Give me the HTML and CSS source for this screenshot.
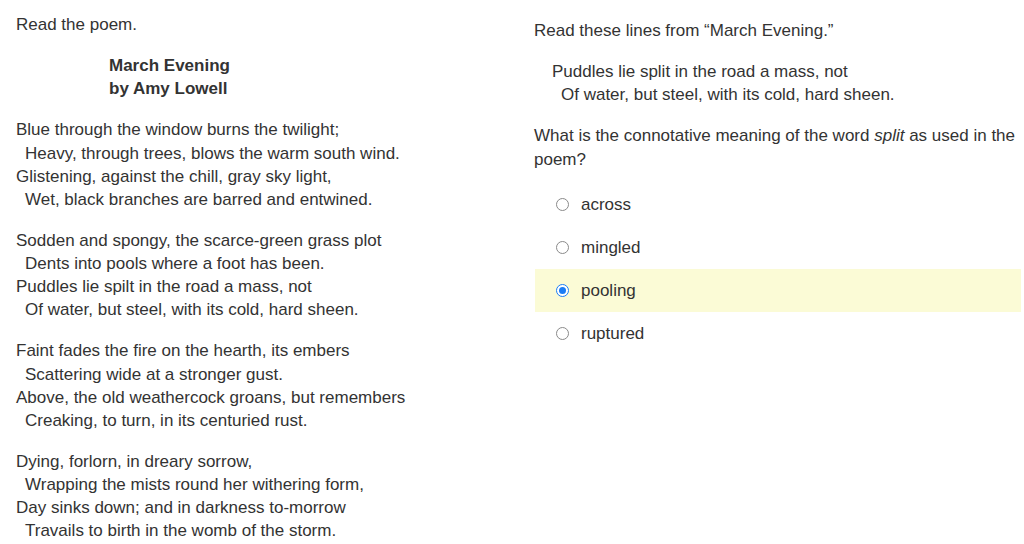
FILE: index.html
```html
<!DOCTYPE html>
<html>
<head>
<meta charset="utf-8">
<link rel="stylesheet" href="styles.css">
</head>
<body>
<div class="page">
  <section class="passage">
    <p class="block">Read the poem.</p>
    <div class="block title">
      <div>March Evening</div>
      <div>by Amy Lowell</div>
    </div>
    <div class="block stanza">
      <div>Blue through the window burns the twilight;</div>
      <div class="ind">Heavy, through trees, blows the warm south wind.</div>
      <div>Glistening, against the chill, gray sky light,</div>
      <div class="ind">Wet, black branches are barred and entwined.</div>
    </div>
    <div class="block stanza">
      <div>Sodden and spongy, the scarce-green grass plot</div>
      <div class="ind">Dents into pools where a foot has been.</div>
      <div>Puddles lie spilt in the road a mass, not</div>
      <div class="ind">Of water, but steel, with its cold, hard sheen.</div>
    </div>
    <div class="block stanza">
      <div>Faint fades the fire on the hearth, its embers</div>
      <div class="ind">Scattering wide at a stronger gust.</div>
      <div>Above, the old weathercock groans, but remembers</div>
      <div class="ind">Creaking, to turn, in its centuried rust.</div>
    </div>
    <div class="block stanza">
      <div>Dying, forlorn, in dreary sorrow,</div>
      <div class="ind">Wrapping the mists round her withering form,</div>
      <div>Day sinks down; and in darkness to-morrow</div>
      <div class="ind">Travails to birth in the womb of the storm.</div>
    </div>
  </section>
  <section class="question">
    <p class="block">Read these lines from “March Evening.”</p>
    <div class="block quote">
      <div>Puddles lie split in the road a mass, not</div>
      <div class="ind">Of water, but steel, with its cold, hard sheen.</div>
    </div>
    <p class="block">What is the connotative meaning of the word <em>split</em> as used in the poem?</p>
    <ul class="options">
      <li class="option"><span class="radio"></span><span>across</span></li>
      <li class="option"><span class="radio"></span><span>mingled</span></li>
      <li class="option selected"><span class="radio checked"></span><span>pooling</span></li>
      <li class="option"><span class="radio"></span><span>ruptured</span></li>
    </ul>
  </section>
</div>
</body>
</html>
```
FILE: styles.css
```css
html, body {
  margin: 0;
  padding: 0;
  background: #ffffff;
}
body {
  font-family: "Liberation Sans", Arial, Helvetica, sans-serif;
  font-size: 17px;
  line-height: 23.12px;
  color: #333333;
}
.page {
  display: grid;
  grid-template-columns: 518px 487px;
  column-gap: 0;
  padding-left: 16px;
}
.passage {
  padding-top: 13px;
}
.question {
  padding-top: 19px;
}
.block {
  margin: 0 0 18px 0;
}
.title {
  font-weight: bold;
  padding-left: 93px;
}
.ind {
  padding-left: 9px;
}
.quote {
  padding-left: 18px;
}
.options {
  list-style: none;
  margin: -6px 0 0 0;
  padding: 0;
}
.option {
  display: flex;
  align-items: center;
  height: 43px;
  padding-left: 21px;
  gap: 12px;
  margin-left: 1px;
}
.option.selected {
  background: #fbfbd6;
}
.radio {
  box-sizing: border-box;
  width: 13px;
  height: 13px;
  border-radius: 50%;
  border: 1px solid #8a8a8a;
  background: #ffffff;
  flex: none;
  position: relative;
}
.radio.checked {
  border-color: #1a7cf5;
}
.radio.checked::after {
  content: "";
  position: absolute;
  left: 2px;
  top: 2px;
  width: 7px;
  height: 7px;
  border-radius: 50%;
  background: #1a7cf5;
}
```
